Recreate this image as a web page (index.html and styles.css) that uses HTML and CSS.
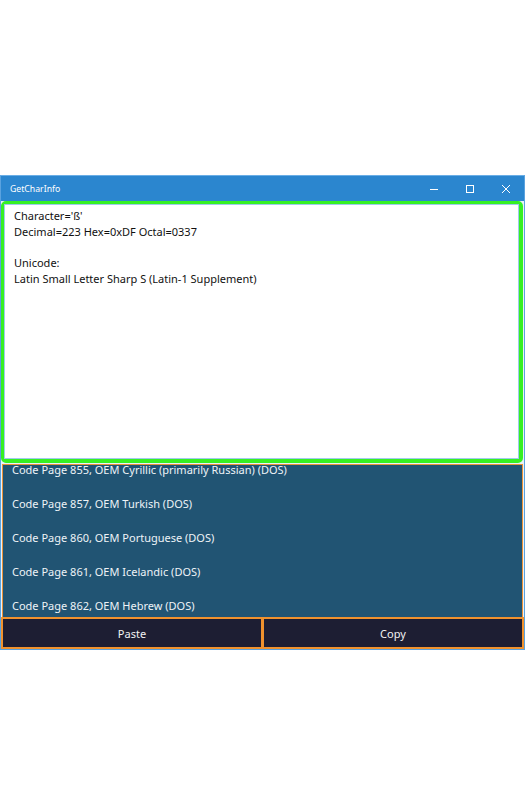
FILE: index.html
```html
<!DOCTYPE html>
<html>
<head>
<meta charset="utf-8">
<link rel="stylesheet" href="styles.css">
</head>
<body>
<div class="window">
  <div class="titlebar">
    <span class="title">GetCharInfo</span>
    <div class="controls">
      <span class="ctl"><svg width="10" height="10" viewBox="0 0 10 10"><path d="M1 5.5H9" stroke="#fff" stroke-width="1" fill="none"/></svg></span>
      <span class="ctl"><svg width="10" height="10" viewBox="0 0 10 10"><rect x="1.5" y="1.5" width="7" height="7" stroke="#fff" stroke-width="1" fill="none"/></svg></span>
      <span class="ctl"><svg width="10" height="10" viewBox="0 0 10 10"><path d="M1 1L9 9M9 1L1 9" stroke="#fff" stroke-width="1" fill="none"/></svg></span>
    </div>
  </div>
  <div class="focus">
    <div class="textbox">
      <div>Character='ß'</div>
      <div>Decimal=223 Hex=0xDF Octal=0337</div>
      <div>&nbsp;</div>
      <div>Unicode:</div>
      <div>Latin Small Letter Sharp S (Latin-1 Supplement)</div>
    </div>
  </div>
  <div class="list">
    <div class="items">
      <div class="item">Code Page 855, OEM Cyrillic (primarily Russian) (DOS)</div>
      <div class="item">Code Page 857, OEM Turkish (DOS)</div>
      <div class="item">Code Page 860, OEM Portuguese (DOS)</div>
      <div class="item">Code Page 861, OEM Icelandic (DOS)</div>
      <div class="item">Code Page 862, OEM Hebrew (DOS)</div>
    </div>
  </div>
  <div class="buttons">
    <div class="btn btn-left">Paste</div>
    <div class="btn btn-right">Copy</div>
  </div>
</div>
</body>
</html>
```

FILE: styles.css
```css
html, body {
  margin: 0;
  padding: 0;
  background: #ffffff;
}
body {
  font-family: "Noto Sans", "Open Sans", sans-serif;
  width: 525px;
  height: 787px;
  overflow: hidden;
}
.window {
  margin-top: 175px;
  width: 525px;
  box-sizing: border-box;
  border: 1px solid #5aa2df;
  border-top-color: #6aaee6;
  display: flex;
  flex-direction: column;
  background: #e9f1f8;
}
.titlebar {
  height: 25px;
  background: #2b86cf;
  display: flex;
  align-items: center;
  justify-content: space-between;
  color: #fff;
}
.title {
  font-size: 8.7px;
  padding-left: 9px;
}
.controls {
  display: flex;
  height: 100%;
}
.ctl {
  width: 36px;
  display: flex;
  align-items: center;
  justify-content: center;
}
.focus {
  height: 262px;
  box-sizing: border-box;
  margin: 0 1px 1px 0;
  border: 3px solid #36f022;
  border-right-width: 4px;
  border-bottom-width: 4px;
  border-radius: 5px;
  background: #ffffff;
  display: flex;
}
.textbox {
  flex: 1;
  border: 1px solid #9fcbea;
  background: #fff;
  padding: 3px 8px 3px 9px;
  font-size: 11px;
  line-height: 15.7px;
  color: #111;
}
.list {
  height: 153px;
  box-sizing: border-box;
  border: 1px solid #e8923a;
  border-bottom: 0;
  margin: 0 1px;
  background: #215473;
  overflow: hidden;
}
.items {
  margin-top: -13px;
}
.item {
  height: 34px;
  display: flex;
  align-items: center;
  padding-left: 9px;
  font-size: 11px;
  color: #eef3f7;
}
.buttons {
  display: flex;
  height: 32px;
}
.btn {
  flex: 1;
  background: #1d1e33;
  border: 2px solid #f0922e;
  color: #f2f2f2;
  font-size: 11px;
  display: flex;
  align-items: center;
  justify-content: center;
}
.btn-right {
  border-left-width: 1px;
}
```
